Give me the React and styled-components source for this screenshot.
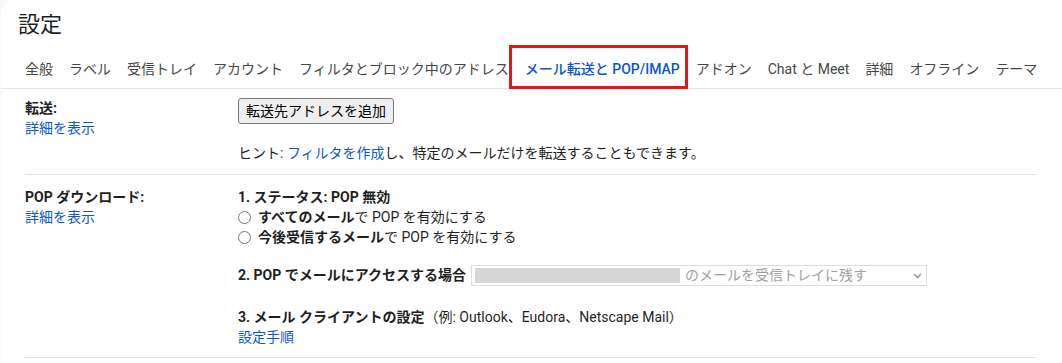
import React from "react";
import styled, { createGlobalStyle } from "styled-components";

const GlobalStyle = createGlobalStyle`
  html, body {
    margin: 0;
    padding: 0;
    background: #f6f8fc;
  }
  body {
    font-family: Roboto, "Noto Sans CJK JP", sans-serif;
    color: #1f1f1f;
  }
`;

const Panel = styled.div`
  margin-left: 1px;
  height: 100vh;
  background: #fff;
  border-top-left-radius: 14px;
  overflow: hidden;
`;

const Title = styled.h1`
  margin: 0;
  padding: 11px 0 6px 17px;
  font-size: 22px;
  line-height: 28px;
  font-weight: 400;
  color: #1f1f1f;
`;

const Tabs = styled.nav`
  display: flex;
  height: 43px;
  padding-left: 16px;
  border-bottom: 1px solid #e3e3e3;
`;

const Tab = styled.div`
  position: relative;
  display: flex;
  align-items: center;
  padding: 3px 8px 0;
  font-size: 14px;
  white-space: nowrap;
  color: ${(p) => (p.$active ? "#0b57d0" : "#444746")};
  font-weight: ${(p) => (p.$active ? 500 : 400)};

  ${(p) =>
    p.$active &&
    `
    &::after {
      content: "";
      position: absolute;
      left: -8px;
      right: 0;
      top: 0;
      bottom: -1px;
      border: 3px solid #e3161b;
    }
  `}
`;

const Section = styled.div`
  display: grid;
  grid-template-columns: 213px 1fr;
  margin: 0 25px 0 24px;
  padding: ${(p) => p.$top}px 0 ${(p) => p.$bottom}px;
  border-bottom: 1px solid #e3e3e3;
  font-size: 14px;
  line-height: 20px;
`;

const LabelCol = styled.div`
  display: flex;
  flex-direction: column;
`;

const Label = styled.div`
  font-weight: 700;
  color: #1f1f1f;
`;

const Link = styled.a`
  color: #0b57d0;
  text-decoration: none;
  cursor: pointer;
`;

const Content = styled.div`
  display: flex;
  flex-direction: column;
  align-items: flex-start;
`;

const Button = styled.button`
  height: 26px;
  padding: 0 7px;
  border: 1px solid #767676;
  border-radius: 3px;
  background: #efefef;
  color: #000;
  font-family: inherit;
  font-size: 14px;
  line-height: 24px;
`;

const Hint = styled.div`
  margin-top: 19px;
  color: #1f1f1f;
`;

const Line = styled.div`
  display: flex;
  align-items: center;
  gap: ${(p) => p.$gap || 0}px;
  margin-top: ${(p) => p.$mt || 0}px;
  line-height: ${(p) => p.$lh || 20}px;
  white-space: nowrap;
`;

const Strong = styled.b`
  font-weight: 700;
`;

const Radio = styled.span`
  width: 13px;
  height: 13px;
  box-sizing: border-box;
  border: 1px solid #767676;
  border-radius: 50%;
  margin-right: 7px;
  flex-shrink: 0;
`;

const Select = styled.div`
  display: flex;
  align-items: center;
  width: 456px;
  height: 21px;
  box-sizing: border-box;
  border: 1px solid #dcdcdc;
  padding: 0 4px 0 3px;
  color: #a0a0a0;
`;

const Redacted = styled.span`
  width: 205px;
  height: 15px;
  background: #d6d6d6;
  margin-right: 5px;
`;

const Chevron = styled.svg`
  margin-left: auto;
`;

const tabs = [
  "全般",
  "ラベル",
  "受信トレイ",
  "アカウント",
  "フィルタとブロック中のアドレス",
  "メール転送と POP/IMAP",
  "アドオン",
  "Chat と Meet",
  "詳細",
  "オフライン",
  "テーマ",
];

export default function App() {
  return (
    <>
      <GlobalStyle />
      <Panel>
        <Title>設定</Title>
        <Tabs>
          {tabs.map((t) => (
            <Tab key={t} $active={t === "メール転送と POP/IMAP"}>
              {t}
            </Tab>
          ))}
        </Tabs>

        <Section $top={9} $bottom={11}>
          <LabelCol>
            <Label>転送:</Label>
            <Link>詳細を表示</Link>
          </LabelCol>
          <Content>
            <Button>転送先アドレスを追加</Button>
            <Hint>
              ヒント: <Link>フィルタを作成</Link>
              し、特定のメールだけを転送することもできます。
            </Hint>
          </Content>
        </Section>

        <Section $top={12} $bottom={10}>
          <LabelCol>
            <Label>POP ダウンロード:</Label>
            <Link>詳細を表示</Link>
          </LabelCol>
          <Content>
            <Line>
              <Strong>1. ステータス: POP 無効</Strong>
            </Line>
            <Line>
              <Radio />
              <span>
                <Strong>すべてのメール</Strong>で POP を有効にする
              </span>
            </Line>
            <Line>
              <Radio />
              <span>
                <Strong>今後受信するメール</Strong>で POP を有効にする
              </span>
            </Line>
            <Line $mt={18} $gap={5} $lh={21}>
              <Strong>2. POP でメールにアクセスする場合</Strong>
              <Select>
                <Redacted />
                <span>のメールを受信トレイに残す</span>
                <Chevron width="9" height="6" viewBox="0 0 9 6">
                  <path
                    d="M1 1l3.5 3.5L8 1"
                    fill="none"
                    stroke="#9a9a9a"
                    strokeWidth="1.6"
                  />
                </Chevron>
              </Select>
            </Line>
            <Line $mt={21}>
              <span>
                <Strong>3. メール クライアントの設定</Strong>
                （例: Outlook、Eudora、Netscape Mail）
              </span>
            </Line>
            <Link>設定手順</Link>
          </Content>
        </Section>
      </Panel>
    </>
  );
}
